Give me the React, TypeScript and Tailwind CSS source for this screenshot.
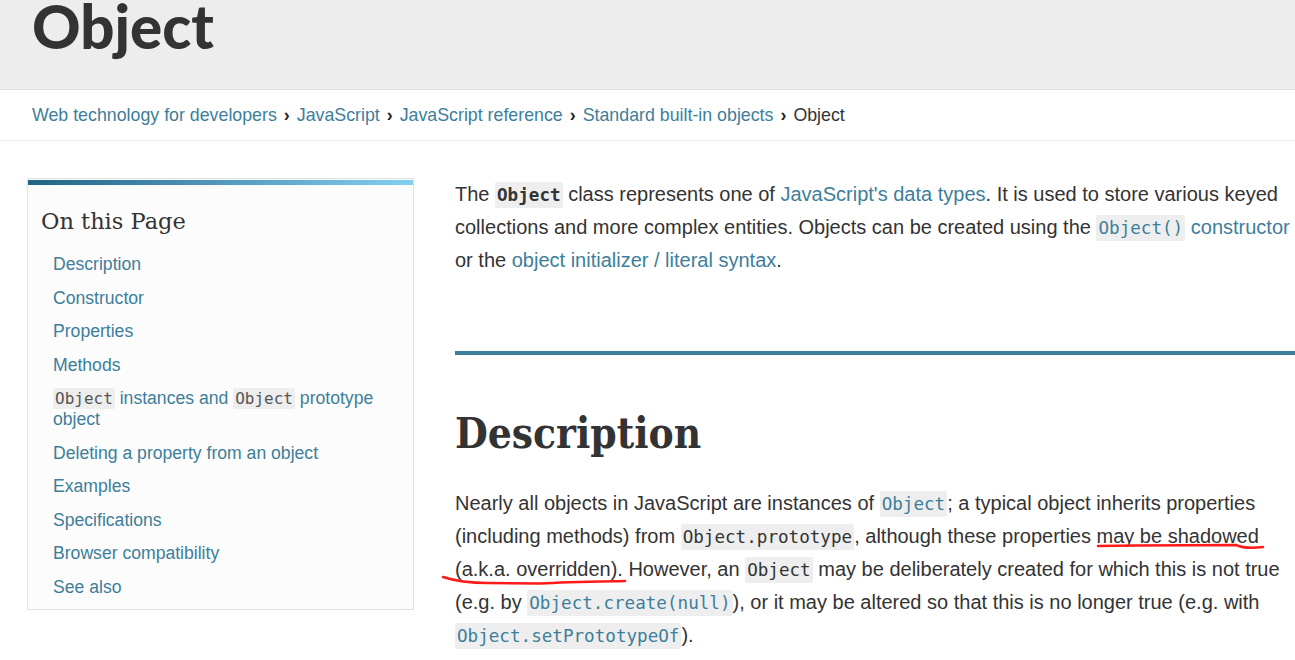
import React from 'react';

const body = { fontFamily: '"Liberation Sans", Arial, sans-serif' };
const mono = { fontFamily: '"DejaVu Sans Mono", "Liberation Mono", monospace' };

const Code = ({ children, tone = 'dark', bold = false }: { children: React.ReactNode; tone?: 'dark' | 'link'; bold?: boolean }) => (
    <code
        style={mono}
        className={
            'bg-[#eeeeee] rounded-[2px] px-[2px] py-[3px] text-[17.6px] leading-none ' +
            (tone === 'link' ? 'text-[#3d7e9a] ' : 'text-[#333333] ') +
            (bold ? 'font-bold' : '')
        }
    >
        {children}
    </code>
);

const A = ({ children }: { children: React.ReactNode }) => (
    <a href="#" className="text-[#3d7e9a]">{children}</a>
);

const tocItems: React.ReactNode[] = [
    'Description',
    'Constructor',
    'Properties',
    'Methods',
    <>
        <code style={mono} className="bg-[#eeeeee] rounded-[2px] px-[2px] py-px text-[16px] leading-none text-[#555]">Object</code> instances and{' '}
        <code style={mono} className="bg-[#eeeeee] rounded-[2px] px-[2px] py-px text-[16px] leading-none text-[#555]">Object</code> prototype object
    </>,
    'Deleting a property from an object',
    'Examples',
    'Specifications',
    'Browser compatibility',
    'See also',
];

const Sidebar = () => (
    <aside className="w-[387px] shrink-0 border border-[#dce3e5] bg-[#fcfcfc] self-start">
        <div className="h-[5px] mt-[1px] bg-gradient-to-r from-[#206584] to-[#83d0f2]" />
        <h2
            style={{ fontFamily: '"DejaVu Serif", serif' }}
            className="pl-[13px] pt-[21px] text-[22.5px] leading-[30px] text-[#333]"
        >
            On this Page
        </h2>
        <ul className="flex flex-col gap-[12.5px] pl-[25px] pr-[20px] pt-[18px] pb-[11px] text-[17.6px] leading-[21px] text-[#3d7e9a]">
            {tocItems.map((item, i) => (
                <li key={i}>
                    <a href="#">{item}</a>
                </li>
            ))}
        </ul>
    </aside>
);

export default function App() {
    return (
        <div style={body} className="relative w-full h-[660px] overflow-hidden bg-white text-[#333333]">
            <header className="h-[90px] bg-[#ededed] border-b border-[#dedede] pl-[32px] overflow-hidden">
                <h1 style={{ fontFamily: 'Lato, "Open Sans", sans-serif' }} className="text-[60px] font-black leading-none -mt-[4px] text-[#333]">
                    Object
                </h1>
            </header>
            <nav className="h-[51px] border-b border-[#eaeaea] pl-[32px] flex items-center text-[17.8px]">
                <A>Web technology for developers</A>
                <span className="mx-[7px] font-bold text-[#222]">›</span>
                <A>JavaScript</A>
                <span className="mx-[7px] font-bold text-[#222]">›</span>
                <A>JavaScript reference</A>
                <span className="mx-[7px] font-bold text-[#222]">›</span>
                <A>Standard built-in objects</A>
                <span className="mx-[7px] font-bold text-[#222]">›</span>
                <span>Object</span>
            </nav>
            <div className="flex pl-[27px] pt-[37px] gap-[41px]">
                <Sidebar />
                <main className="flex-1 min-w-0 overflow-hidden text-[20px] leading-[33px]">
                    <p className="whitespace-nowrap">
                        The <Code bold>Object</Code> class represents one of <A>JavaScript's data types</A>. It is used to store various keyed
                        <br />
                        collections and more complex entities. Objects can be created using the <A><Code tone="link">Object()</Code> constructor</A>
                        <br />
                        or the <A>object initializer / literal syntax</A>.
                    </p>
                    <div className="h-[4px] bg-[#3d7e9a] mt-[74px]" />
                    <h2
                        style={{ fontFamily: '"DejaVu Serif Condensed", "DejaVu Serif", serif' }}
                        className="text-[42px] font-bold leading-[48px] mt-[55px] text-[#333]"
                    >
                        Description
                    </h2>
                    <p className="whitespace-nowrap mt-[29px]">
                        Nearly all objects in JavaScript are instances of <Code tone="link">Object</Code>; a typical object inherits properties
                        <br />
                        (including methods) from <Code>Object.prototype</Code>, although these properties may be shadowed
                        <br />
                        (a.k.a. overridden). However, an <Code>Object</Code> may be deliberately created for which this is not true
                        <br />
                        (e.g. by <Code tone="link">Object.create(null)</Code>), or it may be altered so that this is no longer true (e.g. with
                        <br />
                        <Code tone="link">Object.setPrototypeOf</Code>).
                    </p>
                </main>
            </div>
            {/* red pen marks */}
            <svg className="absolute left-0 top-0 pointer-events-none" width="1295" height="660">
                <path d="M1098 546 L1135 545.5 L1236 545 C1244 548.5 1252 548.5 1263 547" stroke="#ff1a1a" strokeWidth="2.5" fill="none" strokeLinecap="round" />
                <path d="M443 577 C455 581 468 583 488 583 L540 583.5 C565 582 600 581.5 625 581" stroke="#ff1a1a" strokeWidth="2.5" fill="none" strokeLinecap="round" />
            </svg>
        </div>
    );
}
